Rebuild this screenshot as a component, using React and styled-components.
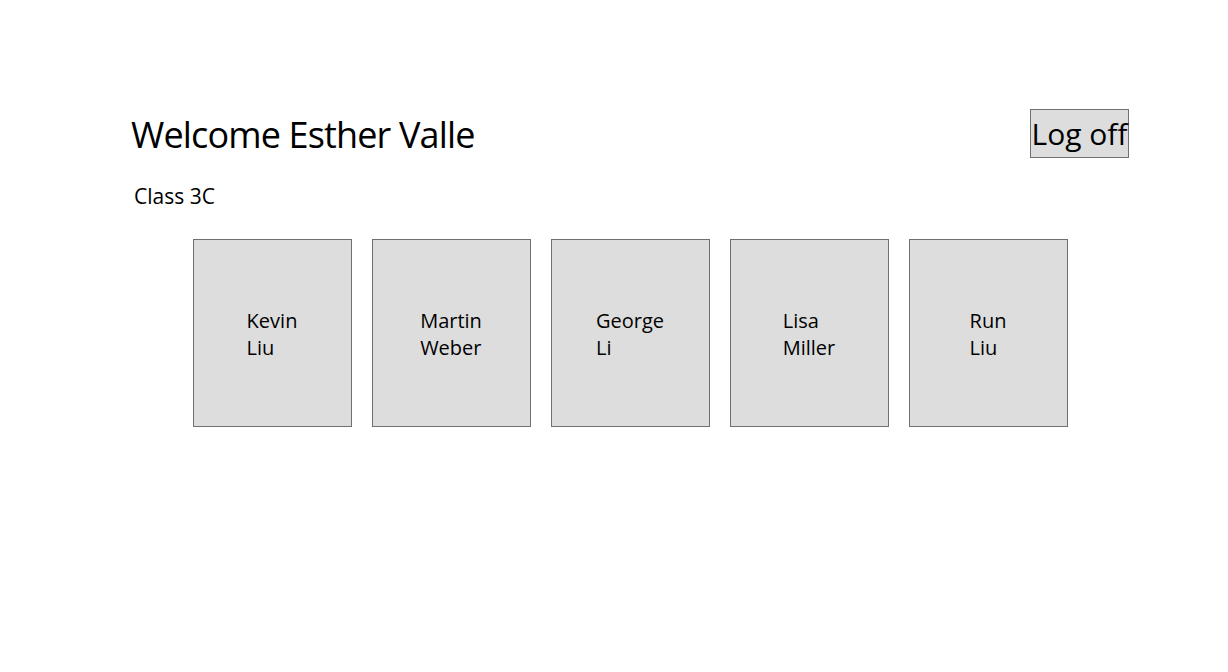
import React from "react";
import styled, { createGlobalStyle } from "styled-components";

const students = [
  { first: "Kevin", last: "Liu" },
  { first: "Martin", last: "Weber" },
  { first: "George", last: "Li" },
  { first: "Lisa", last: "Miller" },
  { first: "Run", last: "Liu" },
];

const App = () => {
  return (
    <>
      <GlobalStyle />
      <Page>
        <Header>
          <Title>Welcome Esther Valle</Title>
          <LogOffBtn>Log off</LogOffBtn>
        </Header>
        <ClassName>Class 3C</ClassName>
        <CardRow>
          {students.map((s) => (
            <StudentCard key={s.first + s.last}>
              <Name>
                {s.first}
                <br />
                {s.last}
              </Name>
            </StudentCard>
          ))}
        </CardRow>
      </Page>
    </>
  );
};

const GlobalStyle = createGlobalStyle`
  body {
    margin: 0;
    background: #fff;
    color: #000;
    font-family: "Open Sans", "Noto Sans", sans-serif;
  }
`;

const Page = styled.main`
  width: 998px;
  margin-left: 131px;
  padding-top: 109px;
`;

const Header = styled.div`
  display: flex;
  justify-content: space-between;
  align-items: flex-start;
`;

const Title = styled.h1`
  margin: 2px 0 0;
  font-size: 36px;
  font-weight: 400;
  line-height: 48px;
  letter-spacing: -0.85px;
`;

const LogOffBtn = styled.button`
  width: 99px;
  height: 49px;
  padding: 0;
  background: #dddddd;
  border: 1px solid #707070;
  font-family: inherit;
  font-size: 30px;
  color: #000;
  cursor: pointer;
`;

const ClassName = styled.div`
  margin: 24px 0 0 3px;
  font-size: 21px;
  line-height: 27px;
`;

const CardRow = styled.div`
  display: flex;
  justify-content: center;
  gap: 20px;
  margin-top: 29px;
`;

const StudentCard = styled.div`
  width: 159px;
  height: 188px;
  box-sizing: border-box;
  background: #dddddd;
  border: 1px solid #707070;
  display: flex;
  align-items: center;
  justify-content: center;
`;

const Name = styled.div`
  font-size: 20px;
  line-height: 27px;
  text-align: left;
  padding-top: 2px;
`;

export default App;
